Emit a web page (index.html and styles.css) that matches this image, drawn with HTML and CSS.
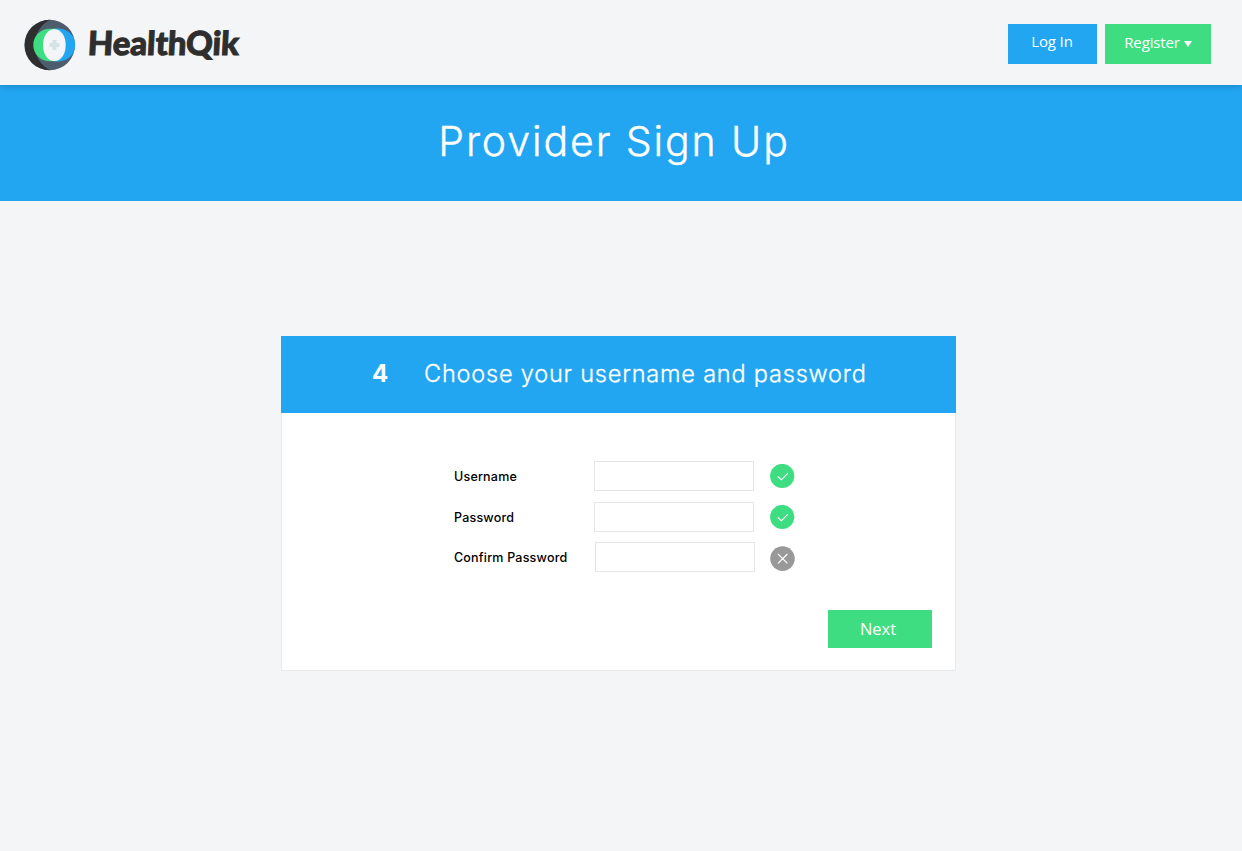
FILE: index.html
```html
<!DOCTYPE html>
<html lang="en">
	<head>
		<meta charset="UTF-8">
		<meta name="viewport" content="width=device-width, initial-scale=1.0" />
		<title>HealthQik - Provider Sign Up</title>
		<link rel="stylesheet" href="styles.css">
	</head>
	<body>
		<header class="header">
			<a class="logo" href="#">
				<svg class="logo-mark" width="52" height="52" viewBox="0 0 52 52">
					<circle cx="25.700" cy="26" r="25.300" fill="#4d5d6e"/>
					<path d="M26 .7A25.300 25.300 0 0 0 26 51.300A28.500 28.500 0 0 1 26 .7Z" fill="#2e2e2e"/>
					<path d="M25.500 9.800h9.700v32.400h-9.700a16.200 16.200 0 0 1 0-32.400Z" fill="#3fdd82"/>
					<path d="M30.350 42.200V9.800h4.650a16.200 16.200 0 0 1 0 32.400Z" fill="#22a6f1"/>
					<path d="M30.350 9.900C45.500 10.500 45.500 41.500 30.350 42.100C15.200 41.500 15.200 10.500 30.350 9.900Z" fill="#f3f5f7"/>
					<path d="M28.500 21h4v3h3v4h-3v3h-4v-3h-3v-4h3z" fill="#d5e3e5"/>
				</svg>
				<span class="logo-text">HealthQik</span>
			</a>
			<nav class="nav">
				<a class="btn btn-login" href="#">Log In</a>
				<a class="btn btn-register" href="#">Register<span class="caret"></span></a>
			</nav>
		</header>

		<div class="banner">
			<h1>Provider Sign Up</h1>
		</div>

		<form class="card" action="" method="post">
			<div class="card-title">
				<span class="step">4</span>
				<h2>Choose your username and password</h2>
			</div>
			<div class="card-body">
				<div class="row">
					<label for="username">Username</label>
					<input type="text" id="username" name="username">
					<svg class="status" width="25" height="25" viewBox="0 0 25 25">
						<circle cx="12.200" cy="12" r="12.100" fill="#3fdd82"/>
						<path d="M7.700 12.500l3.700 3.300 6.600-6.600" fill="none" stroke="#fff" stroke-width="1.200"/>
					</svg>
				</div>
				<div class="row">
					<label for="password">Password</label>
					<input type="password" id="password" name="password">
					<svg class="status" width="25" height="25" viewBox="0 0 25 25">
						<circle cx="12.200" cy="12" r="12.100" fill="#3fdd82"/>
						<path d="M7.700 12.500l3.700 3.300 6.600-6.600" fill="none" stroke="#fff" stroke-width="1.200"/>
					</svg>
				</div>
				<div class="row row-confirm">
					<label for="confirm">Confirm Password</label>
					<input type="password" id="confirm" name="confirm">
					<svg class="status" width="25" height="25" viewBox="0 0 25 25">
						<circle cx="12.500" cy="12.600" r="12.300" fill="#999"/>
						<path d="M8 8l9.400 9.400M17.400 8L8 17.400" fill="none" stroke="#fff" stroke-width="1.200"/>
					</svg>
				</div>
				<button class="btn-next" type="button">Next</button>
			</div>
		</form>
	</body>
</html>
```
FILE: styles.css
```css
* {
	box-sizing: border-box;
}

body {
	margin: 0;
	background: #f3f5f7;
	font-family: Inter, "Open Sans", sans-serif;
	color: #000;
}

h1, h2 {
	margin: 0;
	font-weight: 300;
}

a {
	text-decoration: none;
}

/* header */
.header {
	display: flex;
	justify-content: space-between;
	height: 85px;
	padding: 0 31px 0 24px;
	position: relative;
	background: #f3f5f7;
	box-shadow: 0 1px 7px rgba(0, 0, 0, 0.2);
}

.logo {
	display: flex;
	padding-top: 19px;
}

.logo-text {
	height: 46px;
	margin: 0 0 0 12px;
	font: 900 33px/46px Lato, sans-serif;
	letter-spacing: -0.1px;
	color: #2e2e2e;
	-webkit-text-stroke: 1px #2e2e2e;
	transform: skewX(-3deg);
}

.nav {
	display: flex;
	gap: 8px;
	padding-top: 24px;
}

.btn {
	height: 40px;
	color: #fff;
	font: 15px/35px "Open Sans", sans-serif;
	letter-spacing: -0.15px;
	text-align: center;
}

.btn-login {
	width: 89px;
	padding-right: 1px;
	background: #22a6f1;
}

.btn-register {
	width: 106px;
	background: #3fdd82;
	line-height: 37px;
}

.caret {
	display: inline-block;
	margin: 0 0 1px 4px;
	border: 4px solid transparent;
	border-top: 6px solid #fff;
	border-bottom: 0;
}

/* page title */
.banner {
	height: 116px;
	padding-right: 14px;
	background: #22a6f1;
	color: #fff;
	text-align: center;
}

.banner h1 {
	font-size: 41px;
	line-height: 112px;
	letter-spacing: 1.900px;
	-webkit-text-stroke: 0.4px #fff;
}

/* sign up box */
.card {
	width: 675px;
	height: 335px;
	margin: 135px 0 0 281px;
	background: #fff;
	box-shadow: inset 0 0 0 1px #e9eaec;
}

.card-title {
	display: flex;
	height: 77px;
	padding-left: 91px;
	background: #22a6f1;
	color: #fff;
	line-height: 75px;
}

.step {
	width: 52px;
	font-size: 24px;
	font-weight: 700;
}

.card-title h2 {
	font-size: 23.5px;
	letter-spacing: 0.8px;
	-webkit-text-stroke: 0.3px #fff;
}

.card-body {
	display: flex;
	flex-direction: column;
	padding: 48px 24px 0 173px;
}

.row {
	display: flex;
	height: 30px;
	margin-bottom: 11px;
}

.row label {
	width: 140px;
	font-size: 12.5px;
	font-weight: 500;
	line-height: 32px;
	letter-spacing: 0.2px;
}

.row input {
	width: 160px;
	height: 30px;
	padding: 0 8px;
	border: 1px solid #e6e6e6;
	background: #fff;
	font: inherit;
}

.status {
	margin: 3px 0 0 16px;
}

.row-confirm {
	margin: -1px 0 38px;
}

.row-confirm label {
	width: 141px;
}

.row-confirm .status {
	margin: 4px 0 0 15px;
}

.btn-next {
	align-self: flex-end;
	width: 104px;
	height: 38px;
	padding: 0 4px 0 0;
	border: 0;
	background: #3fdd82;
	color: #fff;
	font: 16.5px/38px "Open Sans", sans-serif;
}
```
